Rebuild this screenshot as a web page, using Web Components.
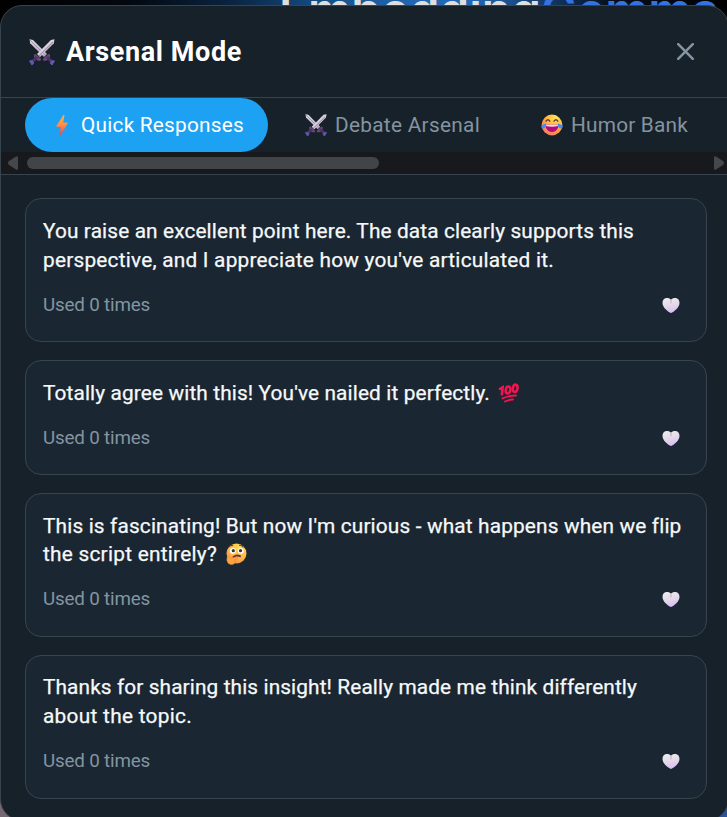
<!DOCTYPE html>
<html lang="en"><head><meta charset="utf-8"><title>Arsenal Mode</title>
<style>html,body{margin:0;height:817px;overflow:hidden;background:#000}</style></head>
<body>
<arsenal-backdrop></arsenal-backdrop>
<arsenal-modal></arsenal-modal>
<script>
const ICONS = {
 swords:`<svg viewBox="0 0 26 26"><defs><linearGradient id="b" x1="0" y1="0" x2="0" y2="1"><stop offset="0" stop-color="#dedbe5"/><stop offset="1" stop-color="#b9a5c3"/></linearGradient></defs>
 <path d="M.5.3 4 1l14 14-3 3L1.2 4.2Z" fill="url(#b)"/><path d="m1 1 15 15" stroke="#9c8da9" stroke-width="1"/>
 <path d="m25.5.3-3.6.7L8 15l3 3L24.8 4.2Z" fill="#d9d3e0"/><path d="M24 3 10 17" stroke="#a591b1" stroke-width="1.3"/>
 <path d="m5 15.5 1.500-.6 5.800 5.200-1.200 1.800-3-.5-3-3ZM21 15.500l-1.500-.6-5.800 5.200 1.200 1.800 3-.5 3-3Z" fill="#69487b"/>
 <path d="m8 18-4 4M18 18l4 4" stroke="#4c345f" stroke-width="3"/><path d="m.5 22 3-.5 1.200 2.600L3 26Zm25 0-3-.5-1.200 2.600L23 26Z" fill="#6656b0" stroke="#6656b0" stroke-linejoin="round"/></svg>`,
 bolt:`<svg viewBox="0 0 22 22"><defs><linearGradient id="g" x1="0" y1="0" x2="0" y2="1"><stop stop-color="#fcb345"/><stop offset=".5" stop-color="#ff8b4c"/><stop offset="1" stop-color="#f0454f"/></linearGradient></defs><path d="M12.200 1.200h1.300l-1.300 7.200h4.300l.2 1.100-7 11.500-.8-.5.7-7.500H5.700l-.3-1.200Z" fill="url(#g)"/></svg>`,
 joy:`<svg viewBox="0 0 22 22"><defs><radialGradient id="j" cx=".7" cy=".15" r=".95"><stop stop-color="#ffe45b"/><stop offset=".55" stop-color="#ffaf3d"/><stop offset="1" stop-color="#ef7566"/></radialGradient></defs><circle cx="11" cy="11" r="10.400" fill="url(#j)"/><path d="M5 7.200q2-2.800 3.800 0M13 7.200q2-2.800 3.800 0" fill="none" stroke="#6b3a3a" stroke-width="1.400" stroke-linecap="round"/><path d="M4.600 10.800h12.800c.3 4-2.600 7.200-6.400 7.200s-6.700-3.200-6.400-7.200Z" fill="#b5067d"/><path d="M4.800 10.800h12.400v1.300q-6.200 1.200-12.400 0Z" fill="#f7d9ee"/><path d="M5 9.200c.8 2.400-.6 5-3 5.200C.3 14.500-.3 12.700.6 11.600 1.600 10.500 3.400 10.600 5 9.200ZM17 9.200c-.8 2.400.6 5 3 5.200 1.700.1 2.300-1.700 1.400-2.800C20.400 10.500 18.600 10.600 17 9.200Z" fill="#3f8dfb"/></svg>`,
 heart:`<svg viewBox="0 0 20 18"><defs><linearGradient id="h" x1=".3" y1="0" x2=".6" y2="1"><stop stop-color="#eeeaf0"/><stop offset=".5" stop-color="#e3d9e7"/><stop offset="1" stop-color="#d9b8fa"/></linearGradient></defs><path d="M10 17C7 15.500 1 11.500 1 6 1 2.800 3 1 5.600 1 7.500 1 9.200 1.700 10 2.900 10.800 1.700 12.500 1 14.400 1 17 1 19 2.800 19 6 19 11.500 13 15.500 10 17Z" fill="url(#h)"/><path d="M10 3.200v3.500" stroke="#b9adbd" stroke-width="1"/></svg>`,
 hundred:`<svg viewBox="0 0 22 22"><g fill="none" stroke="#f8124f" stroke-linecap="round"><path d="m2 6.800 2.600-1.500-.7 7" stroke-width="2.600"/><ellipse cx="10" cy="8" rx="2.200" ry="3.500" transform="rotate(12 10 8)" stroke-width="2.500"/><ellipse cx="17.200" cy="6.300" rx="2.300" ry="3.700" transform="rotate(12 17.200 6.300)" stroke-width="2.500"/><path d="M4.500 16.300q6-2.500 13.500-2.800M7 19.500q3.500-1.700 8-2" stroke-width="1.800"/></g></svg>`,
 think:`<svg viewBox="0 0 22 22"><defs><radialGradient id="t" cx=".65" cy=".2" r=".9"><stop stop-color="#ffdf58"/><stop offset=".6" stop-color="#ffb742"/><stop offset="1" stop-color="#f28355"/></radialGradient></defs><circle cx="11.500" cy="10.500" r="10" fill="url(#t)"/><circle cx="7.800" cy="7.800" r="2.900" fill="#fff"/><circle cx="15.800" cy="7.800" r="2.900" fill="#fff"/><circle cx="8.300" cy="7.700" r="1.600" fill="#492d35"/><circle cx="15.500" cy="7.700" r="1.600" fill="#492d35"/><path d="M4 3.700q2-1.800 4.200-1.300M14 2.300q3-.3 4.500 2" fill="none" stroke="#6d4032" stroke-width="1.200"/><path d="M8.500 14q3-2.500 6.500-.8" fill="none" stroke="#643442" stroke-width="2" stroke-linecap="round"/><path d="M2.500 13.200q1.300-1.200 2.200.7l.5 1.500 6.600-1.500q1.800 0 .8 1.600L9.500 17q1.500 2.500-.8 4-3 1.400-5.500-.8-2.300-2.600-.7-7Z" fill="#ffa33e" stroke="#e98338" stroke-width=".6"/></svg>`
};
const define=(n,tpl,fn)=>customElements.define(n,class extends HTMLElement{
 constructor(){super();this.attachShadow({mode:'open'})}
 connectedCallback(){this.shadowRoot.innerHTML=tpl(this);fn&&fn(this)}
});
define('emoji-icon',e=>`<style>:host{display:inline-block;flex:none;line-height:0}svg{display:block;width:100%;height:100%;overflow:visible}</style>${ICONS[e.getAttribute('name')]}`);
// Spreads letter spacing so a label takes the requested width.
define('text-line',()=>`<style>:host{display:inline-block;white-space:nowrap}span{display:inline-block}</style><span><slot></slot></span>`,e=>{
 const w=+e.getAttribute('width'),s=e.shadowRoot.querySelector('span'),n=e.textContent.length;
 s.style.letterSpacing=((w-s.getBoundingClientRect().width)/n).toFixed(3)+'px';
});
define('arsenal-backdrop',()=>`<style>:host{position:absolute;inset:0;overflow:hidden;background:linear-gradient(90deg,#000 0,#03080f 130px,#0a2340 230px,#17518c 330px,#2468b5 420px,#2468b5 470px,#153d70 540px,#06101f 610px,#000 727px) top/100% 30px no-repeat,linear-gradient(90deg,#756873 0 50%,#29549a 50%)}
 div{position:absolute;top:-14px;left:279px;font:600 48px/48px Inter,sans-serif;color:#dedfdd;white-space:nowrap}b{font-weight:600;color:#3472df}</style><div><text-line width="262">Embedding</text-line><b><text-line width="178">Gemma</text-line></b></div>`);
define('arsenal-tab',e=>`<style>:host{display:flex;box-sizing:border-box;flex:none;height:54px;align-items:center;padding-left:26px;border-radius:27px;color:#8494a0;font-size:20.800px;line-height:26px;gap:8px}:host([active]){background:#1da1f2;color:#fff}emoji-icon{width:22px;height:22px}</style><emoji-icon name="${e.getAttribute('icon')}"></emoji-icon><slot></slot>`);
define('tab-scrollbar',()=>`<style>:host{display:flex;height:22px;background:#18191d;align-items:center}svg{width:10px;height:14px;flex:none;fill:#45484a}i{width:352px;height:12px;border-radius:6px;background:#424548;margin-left:9px;margin-right:auto}.l{margin-left:7px}.r{margin-right:4px}</style><svg class="l" viewBox="0 0 10 14"><path d="M0 7Q0 6 1 5L8 .5q2-.8 2 1v11q0 1.800-2 1L1 9Q0 8 0 7Z"/></svg><i></i><svg class="r" viewBox="0 0 10 14"><path d="M10 7q0-1-1-2L2 .5Q0-.3 0 1.500v11q0 1.800 2 1L9 9q1-1 1-2Z"/></svg>`);
define('response-card',()=>`<style>:host{display:block;box-sizing:border-box;border:1px solid #38444d;border-radius:16px;background:#1a2733;padding:18px 17px 0;height:144px}:host([short]){height:115px}.t{font-size:20.800px;-webkit-text-stroke:.25px #f7f9f9;line-height:28.500px;color:#f7f9f9}.f{display:flex;justify-content:space-between;align-items:center;margin-top:16.500px;height:28px;color:#8494a0;font-size:18.800px;padding-right:8px}emoji-icon{width:20px;height:17px;position:relative;top:.5px}</style><div class="t"><slot></slot></div><div class="f"><text-line width="107">Used 0 times</text-line><emoji-icon name="heart"></emoji-icon></div>`);
define('arsenal-modal',()=>`<style>
:host{position:absolute;left:0;top:5px;width:729px;height:816px;box-sizing:border-box;border:1px solid #38444d;border-radius:22px;background:#17212a;overflow:hidden;font-family:Roboto,sans-serif;color:#fff}
header{height:91px;display:flex;align-items:center;padding-left:28px;gap:11px;border-bottom:1px solid #38444d}
header emoji-icon{width:26px;height:26px}h2{margin:0;font:700 27px/32px Roboto,sans-serif}
.x{width:17px;height:17px;margin-left:auto;margin-right:34px;stroke:#8494a0;stroke-width:2.500;stroke-linecap:round}
nav{display:flex;padding-left:24px;gap:11px}main{display:flex;flex-direction:column;gap:18px;padding:23px 21px 0 24px;border-top:1px solid #38444d}
.e{width:22px;height:22px;vertical-align:-4px;margin-left:8px;margin-top:-2px}
response-card:nth-child(3){padding-top:17.500px}response-card:nth-child(4){padding-top:17px}
</style><header><emoji-icon name="swords"></emoji-icon><h2><text-line width="176">Arsenal Mode</text-line></h2><svg class="x" viewBox="0 0 17 17"><path d="m1.200 1.200 14.600 14.600m0-14.600L1.200 15.800"/></svg></header>
<nav><arsenal-tab active icon="bolt" style="width:243px"><text-line width="163">Quick Responses</text-line></arsenal-tab><arsenal-tab icon="swords" style="width:225px"><text-line width="145">Debate Arsenal</text-line></arsenal-tab><arsenal-tab icon="joy" style="width:210px"><text-line width="117">Humor Bank</text-line></arsenal-tab></nav>
<tab-scrollbar></tab-scrollbar>
<main>
<response-card><text-line width="591">You raise an excellent point here. The data clearly supports this</text-line><br><text-line width="511">perspective, and I appreciate how you've articulated it.</text-line></response-card>
<response-card short><text-line width="447">Totally agree with this! You've nailed it perfectly.</text-line><emoji-icon class="e" name="hundred"></emoji-icon></response-card>
<response-card><text-line width="638">This is fascinating! But now I'm curious - what happens when we flip</text-line><br><text-line width="174">the script entirely?</text-line><emoji-icon class="e" name="think"></emoji-icon></response-card>
<response-card><text-line width="594">Thanks for sharing this insight! Really made me think differently</text-line><br><text-line width="149">about the topic.</text-line></response-card>
</main>`);
</script></body></html>
